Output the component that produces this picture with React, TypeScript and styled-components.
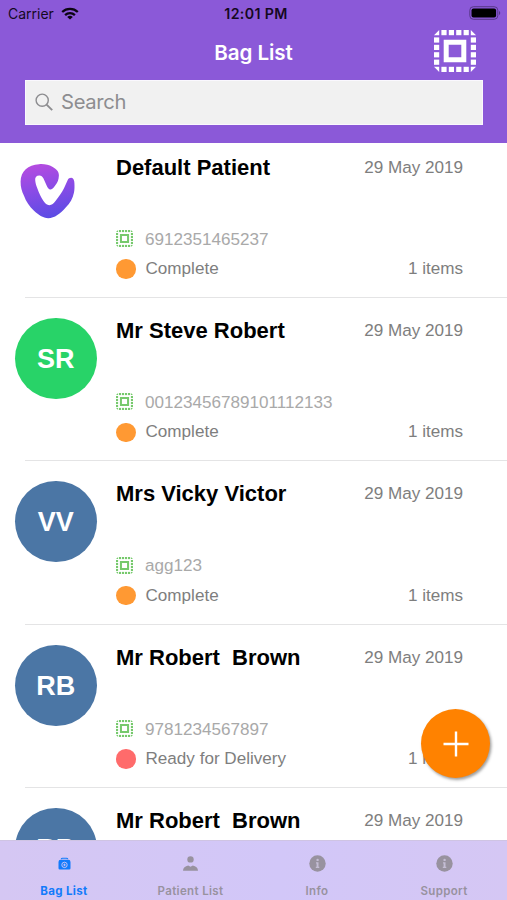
import React from 'react';
import styled, { createGlobalStyle } from 'styled-components';

const Global = createGlobalStyle`
  * { box-sizing: border-box; }
  body { margin: 0; background: #fff; }
`;

const Screen = styled.div`
  position: relative;
  width: 507px;
  height: 900px;
  display: flex;
  flex-direction: column;
  overflow: hidden;
  background: #fff;
  font-family: 'Liberation Sans', Arial, sans-serif;
`;

const Header = styled.header`
  flex: none;
  height: 143px;
  background: #8b59d8;
  z-index: 1;
`;

const StatusBar = styled.div`
  height: 28px;
  padding: 0 6px 0 8px;
  display: grid;
  grid-template-columns: 1fr auto 1fr;
  align-items: center;
  font: 400 14px/28px Inter, sans-serif;
  color: #15091f;
`;

const Carrier = styled.div`
  display: flex;
  align-items: center;
  gap: 7px;
  svg { margin-top: -2px; }
`;

const Clock = styled.div`
  font-weight: 600;
  font-size: 14.2px;
  letter-spacing: 0.35px;
  padding-left: 3px;
`;

const Battery = styled.div`
  justify-self: end;
  display: flex;
  margin-top: -2px;
`;

const TitleBar = styled.div`
  height: 52px;
  display: grid;
  grid-template-columns: 1fr auto 1fr;
  align-items: center;
  padding: 0 31px 4px;
`;

const Title = styled.h1`
  grid-column: 2;
  margin: 0;
  font: 600 20.6px/28px Inter, sans-serif;
  letter-spacing: -0.1px;
  padding-top: 1px;
  color: #fff;
`;

const ScanButton = styled.div`
  justify-self: end;
  display: flex;
  margin-top: -2px;
`;

const SearchBox = styled.div`
  margin: 0 24px 0 25px;
  height: 45px;
  display: flex;
  align-items: center;
  gap: 8px;
  padding-left: 9px;
  border: 1px solid #faf8fe;
  background: #f1f1f1;
  color: #8d8d90;
  font: 400 20.2px/42px Inter, sans-serif;
  svg { margin-top: -2px; }
`;

const SearchLabel = styled.span`
  letter-spacing: -0.3px;
  padding-bottom: 1px;
`;

const List = styled.main`
  flex: 1;
  min-height: 0;
  margin-top: -8.5px;
  overflow: hidden;
`;

const Row = styled.article`
  height: 163.35px;
  display: flex;
  padding-left: 15px;
`;

const AvatarSlot = styled.div`
  width: 101px;
  flex: none;
  padding-top: 20px;
`;

const Avatar = styled.div<{ $color: string }>`
  width: 81.5px;
  height: 81px;
  border-radius: 50%;
  background: ${(p) => p.$color};
  color: #fff;
  font-size: 27px;
  font-weight: 700;
  line-height: 82px;
  text-align: center;
`;

const Logo = styled.svg`
  display: block;
  margin: 8px 0 0 4px;
`;

const Details = styled.div`
  flex: 1;
  padding: 20px 44px 0 0;
  font-size: 17.1px;
  line-height: 26px;
  color: #7e7e7e;
`;

const Line = styled.div<{ $height: number }>`
  display: flex;
  align-items: center;
  justify-content: space-between;
  height: ${(p) => p.$height}px;
`;

const Name = styled.h2`
  margin: 0;
  font-size: 22px;
  line-height: 26px;
  font-weight: 700;
  color: #000;
  white-space: pre;
`;

const Codes = styled.div`
  margin-top: 44px;
  height: 30px;
  display: flex;
  align-items: center;
  gap: 12px;
  color: #a9a9a9;
  svg { margin-top: -2px; }
`;

const Status = styled.span`
  display: flex;
  align-items: center;
  gap: 10px;
`;

const Dot = styled.i<{ $color: string }>`
  width: 19.5px;
  height: 19.5px;
  border-radius: 50%;
  background: ${(p) => p.$color};
`;

const Divider = styled.hr`
  height: 1px;
  margin: -1px 0 0 25px;
  border: 0;
  background: #e4e4e5;
`;

const AddButton = styled.div`
  position: absolute;
  left: 421px;
  top: 709px;
  width: 69px;
  height: 69px;
  border-radius: 50%;
  background: #ff8200;
  box-shadow: 1.5px 2px 3px rgba(0, 0, 0, 0.38);
  display: flex;
  align-items: center;
  justify-content: center;
`;

const Tabs = styled.nav`
  flex: none;
  height: 60px;
  display: grid;
  grid-template-columns: 127px 126px 127px 127px;
  background: linear-gradient(90deg, #d5c7f3, #d2c7f8 55%, #d5c7f4);
  border-top: 1px solid #cfc4e3;
  z-index: 1;
`;

const Tab = styled.div<{ $active?: boolean }>`
  display: flex;
  flex-direction: column;
  align-items: center;
  padding: 14px 0 0 1px;
  gap: 11px;
  color: ${(p) => (p.$active ? '#127bfb' : '#98929f')};
  font: ${(p) => (p.$active ? 700 : 600)} 11.5px/17px Inter, sans-serif;
  letter-spacing: 0.35px;
  svg { display: block; }
`;

const steps = [0, 1, 2, 3];

function ChipIcon({ size, color }: { size: number; color: string }) {
  return (
    <svg width={size} height={size} viewBox="0 0 42 42" fill={color}>
      {steps.map((i) => (
        <React.Fragment key={i}>
          <rect x={7.4 + i * 7.4} y="0" width="5.2" height="5.2" />
          <rect x={7.4 + i * 7.4} y="36.8" width="5.2" height="5.2" />
          <rect x="0" y={7.4 + i * 7.4} width="5.2" height="5.2" />
          <rect x="36.8" y={7.4 + i * 7.4} width="5.2" height="5.2" />
        </React.Fragment>
      ))}
      <path d="M5.2 0v5.2H0ZM36.8 0 42 5.2h-5.2ZM0 36.8h5.2V42ZM36.8 36.8H42L36.8 42Z" />
      <path fillRule="evenodd" d="M9.7 9.7h22.6v22.6H9.7ZM14.7 14.7v12.6h12.6V14.7Z" />
    </svg>
  );
}

function BrandLogo() {
  return (
    <Logo width="56" height="56" viewBox="0 0 56 56">
      <defs>
        <linearGradient id="brand" x1="0.4" y1="0" x2="0.6" y2="1">
          <stop offset="0" stopColor="#b34be0" />
          <stop offset="0.45" stopColor="#8a4be6" />
          <stop offset="1" stopColor="#5a4ce4" />
        </linearGradient>
      </defs>
      <path
        fill="url(#brand)"
        d="M20 1.2C25 .8 30 1.8 33.3 3.8C38 6.2 40 9 39.9 12.5C39.7 17 38.5 19.5 36.7 21.7C35 24.2 33.5 26.3 31.7 26.5C29.7 26.6 28.6 24.8 27.5 22.3L24.5 15.5C23.4 13.3 22 12.4 20.3 12.5C17.5 12.6 15.9 14.3 16.2 17C16.3 19.5 17.3 22.8 18.3 25.2C20 29.8 22 34.2 24.3 37.8C26 40.6 28 42.2 30.3 42.2C32.8 42.2 34.8 40.6 36.7 37.8C40.1 33.3 42.7 29.5 45 25.2L48.6 17.2C49.4 15.5 50.8 14.7 52.3 14.8C54.5 15.2 55.3 17.2 55.4 20C55.6 23.5 55.6 26.5 55 29.5C53.8 35.5 51 40.3 46.7 44.5C41.5 50.5 35.5 55.2 29.3 55.2C24 55.2 19.3 51.8 15 47.8C10.5 43.5 7 38.5 5 32.8C2.8 28.5 1.5 24 1.6 18.5C1.6 13.5 3.5 9 6.7 6.2C10 3 14.5 1.5 20 1.2Z"
      />
    </Logo>
  );
}

function InfoIcon() {
  return (
    <svg width="17" height="17" viewBox="0 0 17 17">
      <circle cx="8.5" cy="8.5" r="8.2" fill="#98929f" />
      <circle cx="8.6" cy="4.9" r="1.2" fill="#c4bdd4" />
      <path d="M7 7.2h2.5v4.5h.8V13H6.8v-1.3h.8V8.4H7Z" fill="#c4bdd4" />
    </svg>
  );
}

function PersonIcon() {
  return (
    <svg width="17" height="17" viewBox="0 0 17 17" fill="#98929f">
      <circle cx="8.5" cy="4.4" r="3.2" />
      <path d="M1 15.8c0-2.9 2.2-4.6 5.2-5.2l2.3 1.2 2.3-1.2c3 .6 5.2 2.3 5.2 5.2Z" />
    </svg>
  );
}

function BagIcon() {
  return (
    <svg width="17" height="17" viewBox="0 0 17 17" fill="none">
      <path d="M5.2 4.2a1.4 1.4 0 0 1 1.4-1h3.8a1.4 1.4 0 0 1 1.4 1" stroke="#127bfb" strokeWidth="1.1" />
      <path d="M4.6 4.8h7.8a2.2 2.2 0 0 1 2.1 2.2v6.3a1.3 1.3 0 0 1-1.3 1.3H3.8a1.3 1.3 0 0 1-1.3-1.3V7a2.2 2.2 0 0 1 2.1-2.2Z" fill="#127bfb" />
      <circle cx="8.5" cy="9.9" r="2.7" stroke="#d5c7f3" strokeWidth="0.9" />
      <path d="M8.5 8.6v2.6M7.2 9.9h2.6" stroke="#d5c7f3" strokeWidth="0.8" />
    </svg>
  );
}

const bags = [
  { name: 'Default Patient', initials: '', color: '', code: '6912351465237', status: 'Complete' },
  { name: 'Mr Steve Robert', initials: 'SR', color: '#28d368', code: '00123456789101112133', status: 'Complete' },
  { name: 'Mrs Vicky Victor', initials: 'VV', color: '#4b76a5', code: 'agg123', status: 'Complete' },
  { name: 'Mr Robert  Brown', initials: 'RB', color: '#4b76a5', code: '9781234567897', status: 'Ready for Delivery' },
];

const lastBag = { name: 'Mr Robert  Brown', initials: 'RB', color: '#4b76a5' };

export default function App() {
  return (
    <Screen>
      <Global />
      <Header>
        <StatusBar>
          <Carrier>
            Carrier
            <svg width="18" height="13" viewBox="0 0 18 13" fill="none" stroke="#0b0512" strokeWidth="2.3">
              <path d="M1.2 5a11.4 11.4 0 0 1 15.6 0" />
              <path d="M4.1 8.1a7.2 7.2 0 0 1 9.8 0" />
              <path d="M9 12.6 6.2 9.9a4.2 4.2 0 0 1 5.6 0Z" fill="#0b0512" stroke="none" />
            </svg>
          </Carrier>
          <Clock>12:01 PM</Clock>
          <Battery>
            <svg width="32" height="14" viewBox="0 0 32 14">
              <rect x="0.8" y="0.7" width="28" height="12.6" rx="3.6" fill="none" stroke="#583889" />
              <rect x="2.5" y="2.4" width="24.6" height="9.2" rx="2" fill="#000" />
              <path d="M30 5c1.7.6 1.7 3.4 0 4Z" fill="#583889" />
            </svg>
          </Battery>
        </StatusBar>
        <TitleBar>
          <Title>Bag List</Title>
          <ScanButton><ChipIcon size={42} color="#fff" /></ScanButton>
        </TitleBar>
        <SearchBox>
          <svg width="18" height="18" viewBox="0 0 18 18" fill="none" stroke="#8d8d90" strokeWidth="1.4">
            <circle cx="7.2" cy="7.2" r="6.1" />
            <path d="m11.6 11.6 5.6 5.6" strokeWidth="1.9" />
          </svg>
          <SearchLabel>Search</SearchLabel>
        </SearchBox>
      </Header>
      <List>
        {bags.map((bag) => (
          <React.Fragment key={bag.code}>
            <Row>
              <AvatarSlot>
                {bag.initials ? <Avatar $color={bag.color}>{bag.initials}</Avatar> : <BrandLogo />}
              </AvatarSlot>
              <Details>
                <Line $height={26}>
                  <Name>{bag.name}</Name>
                  <span>29 May 2019</span>
                </Line>
                <Codes>
                  <ChipIcon size={17} color="#76c96c" />
                  {bag.code}
                </Codes>
                <Line $height={29}>
                  <Status>
                    <Dot $color={bag.status === 'Complete' ? '#ff9933' : '#ff6b6b'} />
                    {bag.status}
                  </Status>
                  <span>1 items</span>
                </Line>
              </Details>
            </Row>
            <Divider />
          </React.Fragment>
        ))}
        <Row>
          <AvatarSlot>
            <Avatar $color={lastBag.color}>{lastBag.initials}</Avatar>
          </AvatarSlot>
          <Details>
            <Line $height={26}>
              <Name>{lastBag.name}</Name>
              <span>29 May 2019</span>
            </Line>
          </Details>
        </Row>
      </List>
      <Tabs>
        <Tab $active><BagIcon />Bag List</Tab>
        <Tab><PersonIcon />Patient List</Tab>
        <Tab><InfoIcon />Info</Tab>
        <Tab><InfoIcon />Support</Tab>
      </Tabs>
      <AddButton>
        <svg width="26" height="26" viewBox="0 0 26 26" stroke="#fff" strokeWidth="2.4">
          <path d="M13 .5v25M.5 13h25" />
        </svg>
      </AddButton>
    </Screen>
  );
}
